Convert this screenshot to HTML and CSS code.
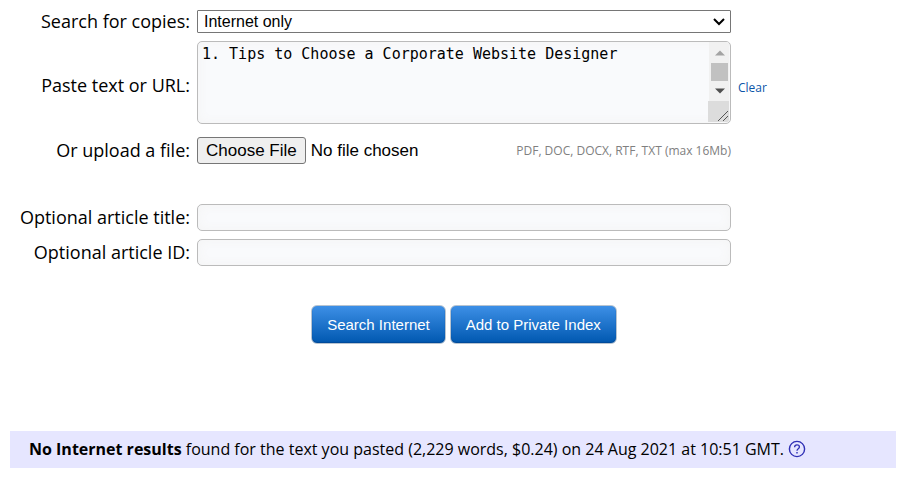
FILE: index.html
```html
<!DOCTYPE html>
<html lang="en">
<head>
    <meta charset="UTF-8">
    <meta name="viewport" content="width=device-width, initial-scale=1.0">
    <title>Search for copies</title>
    <link rel="stylesheet" href="styles.css">
</head>
<body>
    <form class="search-form">
        <div class="row">
            <label for="scope">Search for copies:</label>
            <select id="scope" name="scope">
                <option>Internet only</option>
                <option>Private Index only</option>
                <option>Internet and Private Index</option>
            </select>
        </div>
        <div class="row row-text">
            <label for="text">Paste text or URL:</label>
            <div class="text-box">
                <textarea id="text" name="text">1. Tips to Choose a Corporate Website Designer</textarea>
                <!-- scrollbar and resize grip -->
                <svg class="scrollbar" width="22" height="80" viewBox="0 0 22 80">
                    <path d="M1 0h18a2 2 0 0 1 2 2v58H1z" fill="#f1f1f1"/>
                    <path d="M7 13.5l5-5 5 5z" fill="#a3a3a3"/>
                    <path d="M3 21h17v18H3z" fill="#c1c1c1"/>
                    <path d="M7 46.5h10l-5 5z" fill="#505050"/>
                    <path d="M0 59h21v19a2 2 0 0 1-2 2H0z" fill="#dcdcdc"/>
                    <path d="M10 79L20 69M15 79l5-5" fill="none" stroke="#555"/>
                </svg>
            </div>
            <a class="clear" href="#">Clear</a>
        </div>
        <div class="row row-file">
            <label for="file">Or upload a file:</label>
            <div class="upload">
                <input type="file" id="file" name="file">
                <span class="hint">PDF, DOC, DOCX, RTF, TXT (max 16Mb)</span>
            </div>
        </div>
        <div class="row">
            <label for="title">Optional article title:</label>
            <input type="text" id="title" name="title">
        </div>
        <div class="row">
            <label for="articleId">Optional article ID:</label>
            <input type="text" id="articleId" name="articleId">
        </div>
        <div class="row row-buttons">
            <div class="buttons">
                <button type="submit">Search Internet</button>
                <button type="button">Add to Private Index</button>
            </div>
        </div>
    </form>

    <div class="result">
        <p><b>No Internet results</b> found for the text you pasted (2,229 words, $0.24) on 24 Aug 2021 at 10:51 GMT.</p>
        <a class="help" href="#" aria-label="Help">
            <svg width="18" height="18" viewBox="0 0 18 18" fill="none" stroke="#2f2fb5">
                <circle cx="9" cy="9" r="7.6" stroke-width="1.4"/>
                <path d="M6.6 7.2C6.6 5.6 7.6 4.8 9 4.8s2.4.8 2.4 2.1C11.4 8.6 9 8.8 9 10.7" stroke-width="1.3"/>
                <path d="M9 12v1.5" stroke-width="1.4"/>
            </svg>
        </a>
    </div>
</body>
</html>
```

FILE: styles.css
```css
body {
    margin: 0;
    padding: 10px 14px 10px 10px;
    font-family: "Open Sans", sans-serif;
    font-size: 18px;
    line-height: 20px;
    color: #000;
}
.search-form {
    display: flex;
    flex-direction: column;
    gap: 8px;
}
.row {
    display: grid;
    grid-template-columns: 180px minmax(0, 534px) auto;
    align-items: center;
    column-gap: 7px;
}
label {
    padding-bottom: 2px;
    text-align: right;
    white-space: nowrap;
}
.row-text label {
    padding: 4px 0 0;
}
select,
textarea,
input[type="text"] {
    box-sizing: border-box;
    width: 100%;
    margin: 0;
}
select {
    appearance: none;
    height: 23px;
    padding: 0 24px 0 6px;
    border: 1px solid #767676;
    border-radius: 1px;
    font: 16px "Liberation Sans", Arial, sans-serif;
    color: #000;
    background: #fff url("data:image/svg+xml,%3Csvg xmlns='http://www.w3.org/2000/svg' width='12' height='8'%3E%3Cpath d='M1 1l5 5 5-5' fill='none' stroke='%23000' stroke-width='2'/%3E%3C/svg%3E") no-repeat right 5px center;
}
textarea,
input[type="text"] {
    border: 1px solid #bbb;
    border-radius: 5px;
    background-color: #f9fafc;
    box-shadow: inset 0 0 12px #f4f4f4;
}
input[type="text"] {
    height: 27px;
    padding: 2px 6px;
    font: 16px "Liberation Sans", Arial, sans-serif;
}
.text-box {
    position: relative;
}
textarea {
    display: block;
    height: 83px;
    padding: 2px 26px 2px 4px;
    font: 15px/20px "DejaVu Sans Mono", monospace;
}
.scrollbar {
    position: absolute;
    top: 1px;
    right: 1px;
    pointer-events: none;
}
a {
    color: #0b55a8;
    text-decoration: none;
}
.clear {
    justify-self: start;
    padding-top: 10px;
    font-size: 12px;
}
.row-file {
    margin: 5px 0 32px;
}
.upload {
    display: flex;
    align-items: center;
    justify-content: space-between;
}
input[type="file"] {
    width: 260px;
    font: 17px "Liberation Sans", Arial, sans-serif;
}
input[type="file"]::file-selector-button {
    box-sizing: border-box;
    height: 27px;
    margin: 0 5px 0 0;
    padding: 0 8px;
    border: 1px solid #767676;
    border-radius: 3px;
    background-color: #efefef;
    font: inherit;
    color: #000;
}
.hint {
    font-size: 12px;
    color: #808080;
    white-space: nowrap;
}
.row-buttons {
    margin-top: 31px;
}
.buttons {
    grid-column: 2;
    display: flex;
    justify-content: center;
    gap: 4px;
}
button {
    height: 39px;
    padding: 0 15px;
    border: 1px solid #b8c4d0;
    border-radius: 6px;
    background: linear-gradient(#3d8fe6, #0058b0);
    box-shadow: inset 0 -1px 1px #004a99;
    font: 15px "Liberation Sans", Arial, sans-serif;
    color: #fff;
    cursor: pointer;
}
.result {
    display: flex;
    align-items: center;
    gap: 4px;
    margin-top: 87px;
    padding: 8px 19px 9px;
    background-color: #e6e6ff;
    font-size: 16px;
}
.result p {
    margin: 0;
}
.help {
    display: flex;
}
```
